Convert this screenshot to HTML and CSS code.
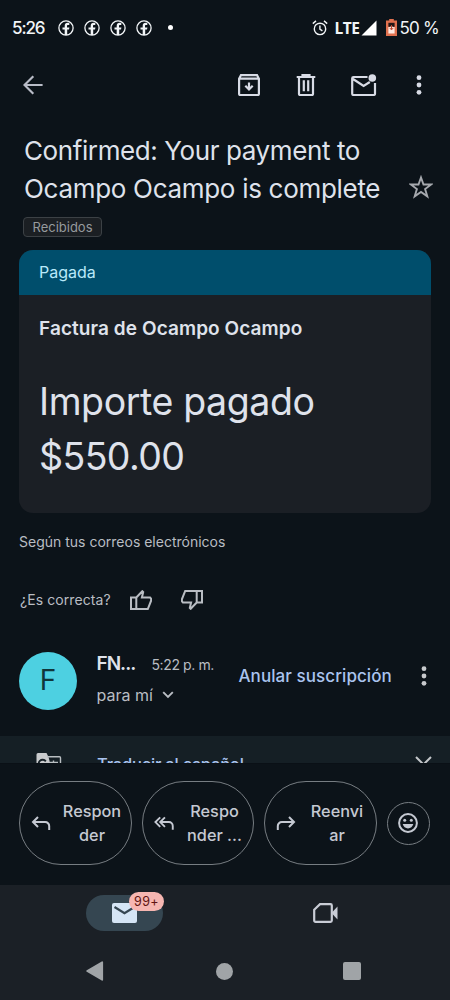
FILE: index.html
```html
<!DOCTYPE html>
<html lang="es">
<head>
<meta charset="utf-8">
<title>Gmail</title>
<link rel="stylesheet" href="styles.css">
</head>
<body>
<svg class="defs" width="0" height="0">
  <symbol id="fb" viewBox="0 0 16 16"><circle cx="8" cy="8" r="7.1" fill="none" stroke="currentColor" stroke-width="1.300"/><path d="M6.700 15V9.600H4.500V7.400h2.200V6c0-2 1.100-3.200 3-3.200h1.600v2.300H10c-.7 0-1 .3-1 1v1.300h2.400L11 9.600H9.200V15z" fill="currentColor"/></symbol>
  <symbol id="dots" viewBox="0 0 6 20"><g fill="currentColor"><circle cx="3" cy="2.700" r="2.400"/><circle cx="3" cy="10" r="2.400"/><circle cx="3" cy="17.300" r="2.400"/></g></symbol>
</svg>
<div class="screen">
  <header class="status">
    <span class="clock">5:26</span>
    <div class="notices">
      <svg width="16" height="16"><use href="#fb"/></svg>
      <svg width="16" height="16"><use href="#fb"/></svg>
      <svg width="16" height="16"><use href="#fb"/></svg>
      <svg width="16" height="16"><use href="#fb"/></svg>
    </div>
    <i class="more-dot"></i>
    <svg class="alarm" width="16" height="16" viewBox="0 0 16 16" fill="none" stroke="currentColor" stroke-width="1.400"><circle cx="8" cy="8.900" r="5.700"/><path d="M.8 3.600 4 .9M15.200 3.600 12 .9M7.900 5.400v3.800l2.500 1.700"/></svg>
    <b class="lte">LTE</b>
    <svg class="signal" width="16" height="16" viewBox="0 0 16 16"><path d="M15.500.5v15H.5z" fill="#fff"/></svg>
    <svg class="battery" width="11" height="17" viewBox="0 0 11 17"><path d="M3.200 0h4.600v1.500H11V17H0V1.500h3.200z" fill="#e0714f"/><path d="M2.400 3.800h6.200v4H2.400z" fill="#241615"/><path d="M2.400 8h2l1.100-2 1.100 2h2v6.600H2.400z" fill="#ffe9e2"/><path d="M5.500 6v4.500M3.700 8.900l1.800 2 1.800-2" fill="none" stroke="#bd4a32"/></svg>
    <span class="percent">50 %</span>
  </header>

  <nav class="toolbar">
    <svg class="back" width="20" height="20" viewBox="0 0 20 20" fill="none" stroke="currentColor" stroke-width="2.200"><path d="M19.600 10H2M10.300 1.300 1.500 10l8.800 8.700"/></svg>
    <svg class="archive" width="22" height="22" viewBox="0 0 22 22" fill="none" stroke="currentColor" stroke-width="2.200"><path d="M1.100 4.800 3 1.100h16l1.900 3.700V20a1 1 0 0 1-1 1H2.100a1 1 0 0 1-1-1zM1.500 4.700h19M11 8.500v7M7.300 11.800l3.700 3.700 3.700-3.700"/></svg>
    <svg class="trash" width="20" height="22" viewBox="0 0 20 22" fill="none" stroke="currentColor" stroke-width="2.200"><path d="M.7 3h18.600M6.500 3V1.100h7V3M3 3v17a1 1 0 0 0 1 1h12a1 1 0 0 0 1-1V3M7.800 6.300v11M12.200 6.300v11"/></svg>
    <svg class="unread" width="26" height="22" viewBox="0 0 26 22" fill="none" stroke="currentColor" stroke-width="2.200"><path d="M16.500 3H2.500A1.300 1.300 0 0 0 1.200 4.300v15.400A1.300 1.300 0 0 0 2.500 21h20.200a1.300 1.300 0 0 0 1.300-1.300V9M2 5l10.600 7 6.200-4"/><circle cx="21.300" cy="4" r="3.800" fill="currentColor" stroke="none"/></svg>
    <svg class="menu" width="6" height="20"><use href="#dots"/></svg>
  </nav>

  <section class="subject">
    <h1><span class="l1">Confirmed: Your payment to</span><br><span class="l2">Ocampo Ocampo is complete</span></h1>
    <svg class="star" width="24" height="24" viewBox="0 0 24 24" fill="none" stroke="currentColor" stroke-width="1.900"><path d="m12 2.500 2.500 7h7.700l-6.100 4.500 2.200 7.300-6.300-4.400-6.300 4.400L7.900 14 1.800 9.500h7.700z"/></svg>
  </section>
  <span class="chip">Recibidos</span>

  <section class="card">
    <div class="card-head">Pagada</div>
    <h2>Factura de Ocampo Ocampo</h2>
    <p class="amount"><span class="a1">Importe pagado</span><br><span class="a2">$550.00</span></p>
  </section>

  <p class="source">Según tus correos electrónicos</p>
  <div class="feedback">
    <span>¿Es correcta?</span>
    <svg class="up" width="22" height="20" viewBox="0 0 22 20" fill="none" stroke="currentColor" stroke-width="2"><path d="M1 7.500h5.300V19H1zM6.300 7.500 12.300 1.200l.9.900-1.300 5.400h8.200l1 1.200v2L17.800 19H6.300"/></svg>
    <svg class="down" width="22" height="20" viewBox="0 0 22 20" fill="none" stroke="currentColor" stroke-width="2"><path d="M21 12.500h-5.300V1H21zM15.700 12.500l-6 6.300-.9-.9 1.300-5.400H1.900l-1-1.200v-2L4.200 1h11.500"/></svg>
  </div>

  <section class="sender">
    <div class="avatar">F</div>
    <div class="who">
      <div class="row"><b class="name">FN...</b><span class="time">5:22 p. m.</span></div>
      <div class="row to"><span>para mí</span><svg width="12" height="8" viewBox="0 0 12 8" fill="none" stroke="currentColor" stroke-width="1.900"><path d="m1.200 1.200 4.800 4.800 4.800-4.800"/></svg></div>
    </div>
    <span class="unsub">Anular suscripción</span>
    <svg class="menu2" width="6" height="20"><use href="#dots"/></svg>
  </section>

  <div class="translate">
    <svg class="gt" width="26" height="26" viewBox="0 0 26 26"><path d="M2 1h8.500l2 4L17 22H2a1.500 1.500 0 0 1-1.500-1.500v-18A1.500 1.500 0 0 1 2 1z" fill="#c9cbcd"/><path d="M11 4.700h12.500a1 1 0 0 1 1 1V25" fill="none" stroke="#b9bec2" stroke-width="1.400"/><path d="M9.800 9.300A4 4 0 1 0 10 14H7" fill="none" stroke="#172127" stroke-width="1.900"/><path d="M14 10.500h8M17.500 8.500v3" stroke="#b9bec2" stroke-width="1.400"/></svg>
    <span>Traducir al español</span>
    <svg class="close" width="17" height="17" viewBox="0 0 17 17" stroke="currentColor" stroke-width="2"><path d="m1 1 15 15M16 1 1 16"/></svg>
  </div>

  <section class="actions">
    <div class="pill"><svg width="19" height="15" viewBox="0 0 19 15" fill="none" stroke="currentColor" stroke-width="2"><path d="M6.500 1 1.500 6l5 5M1.500 6h12.200a4 4 0 0 1 4 4v4"/></svg><span>Respon<br>der</span></div>
    <div class="pill"><svg width="21" height="15" viewBox="0 0 21 15" fill="none" stroke="currentColor" stroke-width="2"><path d="m6.500 1-5 5 5 5M11.500 1l-5 5 5 5M6.500 6h9.200a4 4 0 0 1 4 4v4"/></svg><span>Respo<br>nder ...</span></div>
    <div class="pill"><svg width="19" height="15" viewBox="0 0 19 15" fill="none" stroke="currentColor" stroke-width="2"><path d="m12.500 1 5 5-5 5M17.500 6H5.300a4 4 0 0 0-4 4v4"/></svg><span>Reenvi<br>ar</span></div>
    <div class="emoji"><svg width="20" height="20" viewBox="0 0 20 20"><circle cx="10" cy="10" r="8.900" fill="none" stroke="currentColor" stroke-width="2"/><g fill="currentColor"><circle cx="6.700" cy="7.300" r="1.500"/><circle cx="13.300" cy="7.300" r="1.500"/><path d="M4.700 11h10.600c-.7 2.700-2.700 4.400-5.300 4.400S5.400 13.700 4.700 11z"/></g></svg></div>
  </section>

  <nav class="tabs">
    <div class="mail">
      <svg width="25" height="20" viewBox="0 0 25 20"><rect width="25" height="20" rx="2" fill="#d5e5f5"/><path d="m2.500 4 10 6.300 10-6.300" fill="none" stroke="#354651" stroke-width="2.200"/></svg>
      <span class="badge">99+</span>
    </div>
    <svg class="meet" width="26" height="20" viewBox="0 0 26 20"><path d="M1.200 6.800 7 1.200h10.500a1.300 1.300 0 0 1 1.300 1.300v15a1.300 1.300 0 0 1-1.300 1.300h-15a1.300 1.300 0 0 1-1.300-1.300z" fill="none" stroke="currentColor" stroke-width="2.200"/><path d="m18.500 10 6-6.500v13z" fill="currentColor"/></svg>
  </nav>
  <footer class="system">
    <svg width="18" height="20" viewBox="0 0 18 20"><path d="M16.200 1.200v17.600L1.200 10z" fill="#a0a4a7" stroke="#a0a4a7" stroke-width="1.800" stroke-linejoin="round"/></svg>
    <i class="home"></i>
    <i class="recent"></i>
  </footer>
</div>
</body>
</html>
```
FILE: styles.css
```css
* { box-sizing: border-box; }
body { margin: 0; background: #0c1319; }
h1, h2, p { margin: 0; font-weight: 400; }
svg { display: block; flex: none; }
i { display: block; flex: none; }
.defs { position: absolute; }
.screen { width: 450px; height: 1000px; overflow: hidden; display: flex; flex-direction: column; background: #0c1319; color: #dfe2eb; font-family: Inter, Roboto, sans-serif; white-space: nowrap; }
.screen > * { flex: none; }

.status { height: 55px; display: flex; align-items: center; padding-left: 12px; color: #f2f5f7; font-size: 17px; }
.clock { width: 45.500px; font-weight: 500; letter-spacing: -1.100px; }
.notices { display: flex; gap: 10.300px; }
.more-dot { width: 5px; height: 5px; border-radius: 50%; background: #fff; margin-left: 15.600px; }
.alarm { margin-left: 139.500px; }
.lte { width: 27px; margin-left: 6px; font: 700 15.500px "Open Sans", sans-serif; letter-spacing: -.5px; }
.battery { margin-left: 9px; }
.percent { margin-left: 2px; letter-spacing: -.8px; }

.toolbar { height: 61px; display: flex; align-items: center; padding: 0 0 1px 23px; color: #d8dbe5; }
.back { color: #b9bcc7; }
.archive { margin-left: 195px; }
.trash { margin-left: 36px; }
.unread { margin-left: 35px; }
.menu { margin-left: 39px; }

.subject { height: 101px; padding: 16px 17px 0 24px; display: flex; justify-content: space-between; }
h1 { font-size: 26px; line-height: 38px; }
.l1 { letter-spacing: -.4px; }
.l2 { letter-spacing: -.3px; }
.star { margin-top: 43px; color: #a6a9ae; }
.chip { width: 79px; height: 20px; margin-left: 23px; border: 1px solid #3c4145; border-radius: 4px; background: #1b1f23; color: #969a9d; font-size: 13px; line-height: 18px; text-align: center; }

.card { width: 412px; height: 263px; margin: 13px 0 0 19px; border-radius: 14px; overflow: hidden; background: #1b1f25; }
.card-head { height: 45px; padding-left: 20px; line-height: 45px; background: #004e6c; color: #b9e9fa; font-size: 16px; }
h2 { margin: 20px 0 0 20px; font-size: 19px; font-weight: 600; line-height: 28px; letter-spacing: .08px; }
.amount { margin: 31px 0 0 20px; font-size: 37.500px; line-height: 55px; }
.a1 { letter-spacing: -.4px; }
.a2 { letter-spacing: -.6px; }

.source { height: 58px; padding-left: 19px; line-height: 58px; font-size: 14px; color: #b9bdc3; }
.feedback { height: 57px; padding-left: 20px; display: flex; align-items: center; font-size: 14px; color: #b9bdc3; }
.feedback span { width: 91px; letter-spacing: .08px; }
.up { margin-left: 19px; }
.down { margin-left: 29px; }

.sender { height: 108px; padding-left: 19px; display: flex; }
.avatar { width: 58px; height: 58px; margin-top: 24px; border-radius: 50%; background: #4dd0e1; color: #10363b; font-size: 28px; line-height: 57px; text-align: center; }
.who { width: 161px; padding: 22px 0 0 19.500px; }
.row { height: 28px; display: flex; align-items: baseline; }
.name { width: 55px; font-size: 19px; font-weight: 600; letter-spacing: -1px; line-height: 28px; }
.time { color: #b9bdc3; font-size: 14px; letter-spacing: -.4px; }
.to { height: 34px; align-items: center; color: #b9bdc3; font-size: 16px; }
.to svg { margin-left: 9px; }
.unsub { width: 153px; margin: 36px 0 0 .5px; line-height: 24px; font-size: 17px; letter-spacing: .07px; font-weight: 500; color: #aac4ef; }
.menu2 { margin: 38px 0 0 29.500px; color: #c8cacd; }

.translate { height: 27px; display: flex; align-items: flex-start; overflow: hidden; background: #151f25; color: #aac4ef; padding-left: 36px; }
.translate span { width: 318px; margin: 18px 0 0 35px; font-size: 16.500px; letter-spacing: -.2px; font-weight: 500; line-height: 20px; }
.gt { margin-top: 16px; }
.close { margin-top: 20px; color: #c4c7ca; }

.actions { height: 122px; display: flex; align-items: center; gap: 10px; padding: 0 0 3px 19px; color: #c5c9d2; border-top: 1px solid #0a1016; }
.pill { width: 112.500px; height: 84px; border: 1px solid #777d82; border-radius: 42px; display: flex; align-items: center; padding-left: 11px; }
.pill svg { width: 20px; margin-right: 9px; }
.pill span { width: 64px; text-align: center; font-size: 16.300px; line-height: 24px; font-weight: 500; }
.emoji { width: 43px; height: 43px; border: 1px solid #777d82; border-radius: 50%; display: grid; place-items: center; }

.tabs { height: 57px; display: flex; align-items: center; padding: 0 0 1px 86px; background: #1b2026; }
.mail { position: relative; width: 77px; height: 36px; border-radius: 18px; background: #354651; display: grid; place-items: center; }
.badge { position: absolute; left: 43px; top: -3px; width: 35px; height: 19px; border-radius: 10px; background: #f6b6b1; color: #601410; font-size: 12.500px; line-height: 19px; text-align: center; letter-spacing: .4px; }
.meet { margin-left: 150px; color: #c9ccd5; }
.system { height: 58px; display: flex; align-items: center; padding-left: 86px; background: #1b2026; }
.home { width: 17px; height: 17px; border-radius: 50%; background: #a0a4a7; margin-left: 112px; }
.recent { width: 18px; height: 18px; border-radius: 2px; background: #a0a4a7; margin-left: 110px; }
```
